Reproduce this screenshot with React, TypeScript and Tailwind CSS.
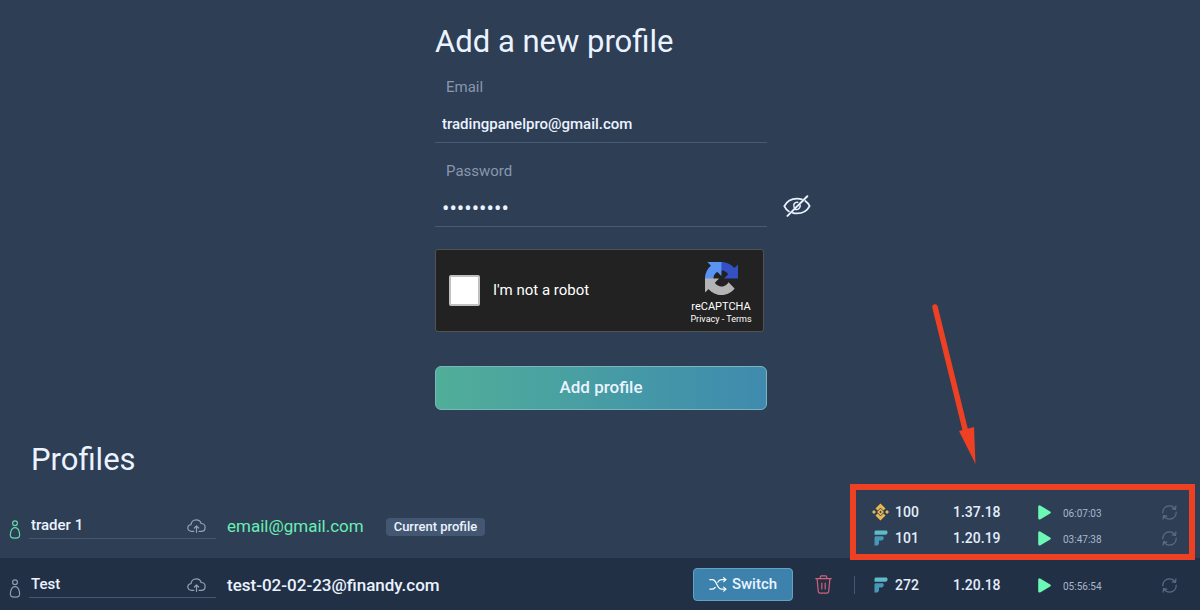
import React, { useState } from "react";

type Exchange = "binance" | "finandy";

interface Bot {
  exchange: Exchange;
  count: number;
  version: string;
  time: string;
}

interface Profile {
  name: string;
  email: string;
  current: boolean;
  bots: Bot[];
}

const profiles: Profile[] = [
  {
    name: "trader 1",
    email: "email@gmail.com",
    current: true,
    bots: [
      { exchange: "binance", count: 100, version: "1.37.18", time: "06:07:03" },
      { exchange: "finandy", count: 101, version: "1.20.19", time: "03:47:38" },
    ],
  },
  {
    name: "Test",
    email: "test-02-02-23@finandy.com",
    current: false,
    bots: [{ exchange: "finandy", count: 272, version: "1.20.18", time: "05:56:54" }],
  },
];

function EyeOffIcon() {
  return (
    <svg className="h-[22px] w-[28px]" viewBox="0 0 28 22" fill="none" stroke="#e8f2ff" strokeWidth="1.8" strokeLinecap="round" aria-hidden="true">
      <path d="M6 16.4C3.7 15 2.1 12.900 1.300 11.100C3.600 6.700 8.300 3.600 14 3.600c1.800 0 3.400.3 4.900.8" />
      <path d="M22.300 5.900c1.900 1.300 3.500 3.100 4.300 5.200c-2.300 4.400-7 7.300-12.600 7.300c-1.500 0-2.900-.2-4.200-.6" />
      <path d="M11.200 12.600c-1.400-2.900.3-5.600 3.500-5.300M12.600 14.500c3 .3 4.800-1.600 4.600-4.200" strokeWidth="1.500" />
      <path d="M4.500 20.900L24.300 1.200" strokeWidth="2" />
    </svg>
  );
}

function RecaptchaLogo() {
  return (
    <svg className="h-[33px] w-[33px]" viewBox="0 0 64 64" aria-hidden="true">
      <path fill="#3450c4" d="M64 31.955l-.033-1.37V4.687l-7.16 7.16C50.948 4.674 42.033.093 32.05.093c-10.4 0-19.622 4.96-25.458 12.64l11.736 11.86a15.55 15.55 0 0 1 4.754-5.334c2.05-1.6 4.952-2.906 8.968-2.906.485 0 .86.057 1.135.163 4.976.393 9.288 3.14 11.828 7.124l-8.307 8.307L64 31.953" />
      <path fill="#5a94f3" d="M31.862.094l-1.37.033H4.594l7.16 7.16C4.58 13.147 0 22.06 0 32.046c0 10.4 4.96 19.622 12.64 25.458L24.5 45.768a15.55 15.55 0 0 1-5.334-4.754c-1.6-2.05-2.906-4.952-2.906-8.968 0-.485.057-.86.163-1.135.393-4.976 3.14-9.288 7.124-11.828l8.307 8.307L31.86.095" />
      <path fill="#b4b4b4" d="M.001 32.045l.033 1.37v25.898l7.16-7.16c5.86 7.173 14.774 11.754 24.76 11.754 10.4 0 19.622-4.96 25.458-12.64l-11.736-11.86a15.55 15.55 0 0 1-4.754 5.334c-2.05 1.6-4.952 2.906-8.968 2.906-.485 0-.86-.057-1.135-.163-4.976-.393-9.288-3.14-11.828-7.124l8.307-8.307c-10.522.04-22.4.066-27.295-.005" />
    </svg>
  );
}

function PersonIcon({ active }: { active: boolean }) {
  return (
    <svg className="h-[19px] w-[12px]" viewBox="0 0 12 19" fill="none" stroke={active ? "#62dcab" : "#8e9bb0"} strokeWidth="1.200" aria-hidden="true">
      <circle cx="6" cy="3.300" r="2.400" />
      <path d="M6 7.700c-2.400 0-3.600 1.700-4.300 4.600c-.5 1.900-.8 3.300.1 4.500c.6.9 1.700 1.300 4.200 1.300s3.600-.4 4.200-1.300c.9-1.200.6-2.600.1-4.500C9.600 9.400 8.400 7.700 6 7.700z" />
    </svg>
  );
}

function CloudUploadIcon() {
  return (
    <svg className="h-[14px] w-[19px]" viewBox="0 0 19 14" fill="none" stroke="#93a0b5" strokeWidth="1.200" strokeLinecap="round" strokeLinejoin="round" aria-hidden="true">
      <path d="M6.800 12.300H4.600C2.400 12.300.8 10.900.8 9c0-1.800 1.300-3.200 3.300-3.400C4.200 2.900 6.300.8 9.200.8c2.400 0 4.300 1.300 4.900 3.700c2.300 0 4 1.600 4 3.900c0 2.300-1.700 3.900-4 3.900H12" />
      <path d="M9.500 13.300V7M7.400 9l2.100-2.100L11.600 9" />
    </svg>
  );
}

function ShuffleIcon() {
  return (
    <svg className="h-[15px] w-[18px]" viewBox="0 0 18 15" fill="none" stroke="#ffffff" strokeWidth="1.200" strokeLinecap="round" strokeLinejoin="round" aria-hidden="true">
      <path d="M.8 2.600h2.400c1.600 0 2.400.7 3.200 2l2.700 5.100c.8 1.600 1.700 2.400 3.300 2.400h4.400" />
      <path d="M.8 12.100h2.400c1.500 0 2.300-.6 3-1.700M8.800 5.200c.9-1.800 1.900-2.600 3.600-2.600h4.400" />
      <path d="M14.700.7l2.200 1.900l-2.200 2M14.700 10.100l2.200 2l-2.200 2" />
    </svg>
  );
}

function TrashIcon() {
  return (
    <svg className="h-[19px] w-[17px]" viewBox="0 0 17 19" fill="none" stroke="#d4607c" strokeWidth="1.200" strokeLinecap="round" strokeLinejoin="round" aria-hidden="true">
      <path d="M.7 3.600h15.600M5.300 3.400V1.900c0-.7.4-1.100 1.100-1.100h4.200c.7 0 1.100.4 1.100 1.100v1.500" />
      <path d="M2.100 3.800l1.200 12.700c.1 1.100.8 1.700 1.800 1.700h6.800c1 0 1.700-.6 1.800-1.700l1.200-12.700" />
      <path d="M6.800 8v6M10.200 8v6" />
    </svg>
  );
}

function BinanceIcon() {
  return (
    <svg className="h-[18px] w-[18px]" viewBox="0 0 18 18" fill="#e9b850" aria-hidden="true">
      <path d="M9 0l5.300 5.300l-2.200 2.200L9 4.400L5.900 7.500l-2.200-2.200z" />
      <path d="M9 18l5.300-5.300l-2.200-2.200L9 13.600l-3.100-3.100l-2.200 2.200z" />
      <path d="M2.100 6.900l2.100 2.100l-2.100 2.100l-2.100-2.100zM15.900 6.900l2.100 2.100l-2.100 2.100l-2.100-2.100z" />
      <path fillRule="evenodd" d="M9 5.400L12.600 9L9 12.600L5.400 9zM9 7.700L7.700 9L9 10.300L10.300 9z" />
    </svg>
  );
}

function FinandyIcon() {
  return (
    <svg className="h-[16px] w-[14px]" viewBox="0 0 14 16" aria-hidden="true">
      <path fill="#5fbcc6" d="M2.200.5h9.600C13 .5 13.500 1.200 13.500 2v.6c0 1.300-.8 2.100-2.100 2.100H.5V2.200C.5 1.200 1.200.5 2.200.5z" />
      <path fill="#4797b8" d="M.5 7.800c0-.9.700-1.500 1.600-1.500h6.200c1 0 1.400.6 1.400 1.400c0 1.700-.9 2.700-2.300 2.700H5v2.600c0 1.500-.9 2.600-2.500 2.600H.5z" />
    </svg>
  );
}

function PlayIcon() {
  return (
    <svg className="h-[15px] w-[13px]" viewBox="0 0 13 15" fill="#6cf7b5" stroke="#6cf7b5" strokeWidth="2.600" strokeLinejoin="round" aria-hidden="true">
      <path d="M1.500 1.700v11.600L11.500 7.500z" />
    </svg>
  );
}

function RefreshIcon() {
  return (
    <svg className="h-[15px] w-[15px]" viewBox="0 0 15 15" fill="none" stroke="#5b6b82" strokeWidth="1.200" strokeLinecap="round" strokeLinejoin="round" aria-hidden="true">
      <path d="M.8 7.800C.6 3.900 3.500.9 7.400.9c2.500 0 4.600 1.200 5.800 3.200M13.900.9l-.4 3.500l-3.300-.6" />
      <path d="M14.200 7.200c.2 3.900-2.700 6.900-6.600 6.900c-2.500 0-4.600-1.200-5.800-3.200M1.100 14.100l.4-3.500l3.300.6" />
    </svg>
  );
}

function BotRow({ bot }: { bot: Bot }) {
  return (
    <li className="grid h-[26px] grid-cols-[23px_58px_85px_25px_1fr_15px] items-center">
      <span className="flex w-[17px] justify-center">{bot.exchange === "binance" ? <BinanceIcon /> : <FinandyIcon />}</span>
      <span className="text-sm font-medium text-[#e3eefc]">{bot.count}</span>
      <span className="text-sm font-medium text-[#e3eefc]">{bot.version}</span>
      <button type="button" aria-label="Run" className="w-[13px]">
        <PlayIcon />
      </button>
      <span className="pt-0.5 text-[10px] text-[#a9b7ca]">{bot.time}</span>
      <button type="button" aria-label="Refresh">
        <RefreshIcon />
      </button>
    </li>
  );
}

function Callout() {
  return (
    <div className="pointer-events-none absolute -top-[8px] right-[5px] left-0 h-[76px] border-6 border-[#ee4023]">
      <svg className="absolute -top-[186px] left-[70px] h-[164px] w-[60px]" viewBox="0 0 60 164" aria-hidden="true">
        <path d="M9 3L39 125" stroke="#ee4023" strokeWidth="5.500" strokeLinecap="round" />
        <path d="M33 127L48 123L49.500 160z" fill="#ee4023" />
      </svg>
    </div>
  );
}

function ProfileRow({ profile }: { profile: Profile }) {
  const [name, setName] = useState(profile.name);
  return (
    <tr className={profile.current ? "h-[66px]" : "h-[52px] bg-[#223046]"}>
      <td className="pl-[9px]">
        <div className="flex items-end gap-2">
          <PersonIcon active={profile.current} />
          <div className="flex h-[28px] flex-1 items-center border-b border-[#47576f] pt-0.5 pr-[10px]">
            <input
              aria-label="Profile name"
              value={name}
              onChange={(e) => setName(e.target.value)}
              className="w-full min-w-0 flex-1 bg-transparent pl-0.5 text-[15px] font-medium outline-none"
            />
            <button type="button" aria-label="Save name">
              <CloudUploadIcon />
            </button>
          </div>
        </div>
      </td>
      <td className="pt-[3px] pl-[11px]">
        <div className="flex items-center gap-[22px]">
          <span className={profile.current ? "text-[17px] text-[#69eeb3]" : "text-[17px] font-medium"}>{profile.email}</span>
          {profile.current && (
            <span className="rounded bg-[#445772] px-2 text-[13px] leading-[18px] font-medium">Current profile</span>
          )}
        </div>
      </td>
      <td>
        {!profile.current && (
          <div className="flex items-center">
            <button type="button" className="flex h-[33px] w-[100px] items-center justify-center gap-[5px] rounded border border-[#64a2c3] bg-[#3c82ad] text-[15px] font-medium">
              <ShuffleIcon />
              Switch
            </button>
            <button type="button" aria-label="Delete profile" className="ml-[22px]">
              <TrashIcon />
            </button>
          </div>
        )}
      </td>
      <td className="relative">
        <ul className={profile.current ? "pr-[23px] pl-[22px]" : "pt-0.5 pr-[23px] pl-[22px]"}>
          {profile.bots.map((bot) => (
            <BotRow key={bot.exchange} bot={bot} />
          ))}
        </ul>
        {profile.current ? <Callout /> : <span className="absolute top-[18px] left-1 h-[18px] w-px bg-[#47576f]" />}
      </td>
    </tr>
  );
}

export default function App() {
  const [email, setEmail] = useState("tradingpanelpro@gmail.com");
  const [password, setPassword] = useState("password1");
  const [visible, setVisible] = useState(false);

  return (
    <main className="min-h-screen overflow-x-hidden bg-[#2e3e55] pt-[22px] font-[Roboto,sans-serif] text-[#eaf3ff]">
      <form className="grid grid-cols-[1fr_332px_1fr] pl-0.5" onSubmit={(e) => e.preventDefault()}>
        <h1 className="col-start-2 text-[31px] leading-10">Add a new profile</h1>

        <label htmlFor="email" className="col-start-2 mt-[13px] pl-[11px] text-[15px] leading-6 text-[#8797ad]">
          Email
        </label>
        <input
          id="email"
          type="email"
          value={email}
          onChange={(e) => setEmail(e.target.value)}
          className="col-start-2 mt-[7px] h-[37px] border-b border-[#475a74] bg-transparent px-[7px] text-[15px] font-medium outline-none"
        />

        <label htmlFor="password" className="col-start-2 mt-4 pl-[11px] text-[15px] leading-6 text-[#8797ad]">
          Password
        </label>
        <input
          id="password"
          type={visible ? "text" : "password"}
          value={password}
          onChange={(e) => setPassword(e.target.value)}
          className="col-start-2 mt-[7px] h-[37px] border-b border-[#475a74] bg-transparent px-[7px] text-[22px] outline-none"
        />
        <button type="button" aria-label="Show password" onClick={() => setVisible(!visible)} className="col-start-3 mt-0.5 ml-4 justify-self-start">
          <EyeOffIcon />
        </button>

        <div className="col-start-2 mt-[22px] mr-[3px] flex h-[83px] items-center rounded-[3px] border border-[#525252] bg-[#222222] pl-[13px]">
          <input id="robot" type="checkbox" className="size-[31px] appearance-none rounded-[2px] border-2 border-[#c1c1c1] bg-white checked:bg-[#4a90e2]" />
          <label htmlFor="robot" className="flex-1 pl-[13px] text-[15px] text-white">
            I'm not a robot
          </label>
          <div className="flex w-[84px] flex-col items-center pt-1 text-white">
            <RecaptchaLogo />
            <span className="mt-1 text-[11px] leading-[15px]">reCAPTCHA</span>
            <span className="text-[9px] leading-[10px]">
              <a href="#privacy">Privacy</a> - <a href="#terms">Terms</a>
            </span>
          </div>
        </div>

        <button type="submit" className="col-start-2 mt-[34px] h-[44px] rounded-md border border-[#79b7bd] bg-linear-to-r from-[#51ae98] to-[#3f8aae] text-[17px] font-medium">
          Add profile
        </button>
      </form>

      <section>
        <h2 className="mt-[30px] pl-[31px] text-[31px] leading-10">Profiles</h2>
        <table className="mt-3 w-full table-fixed border-collapse">
          <colgroup>
            <col className="w-[216px]" />
            <col />
            <col className="w-[157px]" />
            <col className="w-[350px]" />
          </colgroup>
          <tbody>
            {profiles.map((profile) => (
              <ProfileRow key={profile.email} profile={profile} />
            ))}
          </tbody>
        </table>
      </section>
    </main>
  );
}
